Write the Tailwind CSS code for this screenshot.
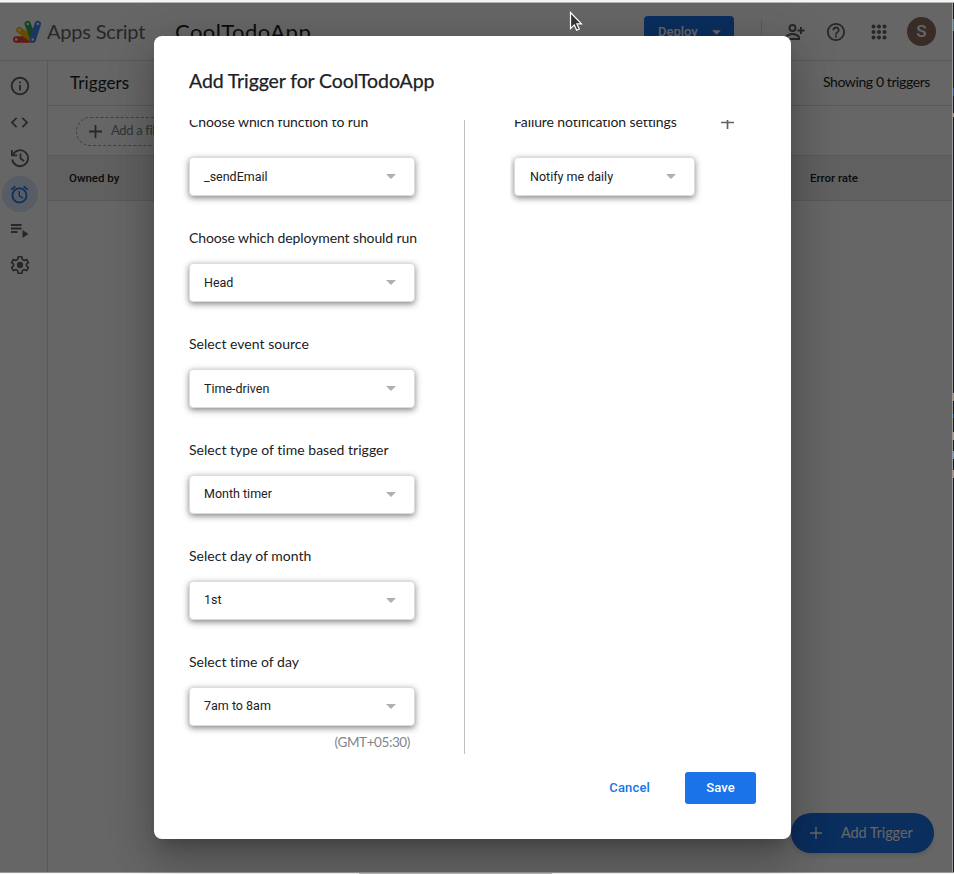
<!DOCTYPE html>
<html lang="en">
<head>
<meta charset="utf-8">
<title>Apps Script - Triggers</title>
<script src="https://cdn.jsdelivr.net/npm/@tailwindcss/browser@4"></script>
</head>
<body class="font-['Lato',sans-serif] text-[#202124]">
<div class="relative flex h-[874px] w-[954px] flex-col overflow-hidden bg-white">
  <div class="h-[3px] shrink-0 border-b border-[#b4b4b4] bg-[#f4f4f4]"></div>
  <div class="flex h-[869px] shrink-0">
    <div class="relative flex w-[952px] flex-col bg-white">
      <header class="flex h-[58px] shrink-0 items-center border-b border-[#dadce0] pl-3">
        <svg class="-mt-0.5 shrink-0" width="30" height="26" viewBox="0 0 30 26" stroke-linecap="round" stroke-width="6.3" fill="none">
          <path d="M4.200 21.500H20.500" stroke="#ea4335"/>
          <path d="M7.400 12L20 21.300" stroke="#fbbc04"/>
          <path d="M15.700 6L20.500 19" stroke="#34a853"/>
          <path d="M25.800 6L20.800 21.500" stroke="#4285f4"/>
          <g fill="#fff" stroke="none"><circle cx="4.200" cy="21.500" r="1.200"/><circle cx="7.400" cy="12" r="1.200"/><circle cx="15.700" cy="6" r="1.200"/><circle cx="25.800" cy="6" r="1.200"/><circle cx="20.700" cy="21.500" r="1.200"/></g>
        </svg>
        <span class="-mt-px ml-[5px] w-32 whitespace-nowrap text-[20px] tracking-[-0.2px] text-[#5f6368]">Apps Script</span>
        <span class="-mt-px w-[469px] whitespace-nowrap text-[22px] tracking-[0.45px]">CoolTodoApp</span>
        <div class="flex h-8 w-[90px] items-center rounded bg-[#1a73e8] pl-[14px] font-['Roboto',sans-serif] text-[13px] font-medium text-white">
          <span class="w-[54px]">Deploy</span>
          <svg class="mt-[2px]" width="9" height="5" viewBox="0 0 10 5" fill="#fff"><path d="M0 0h10L5 5z"/></svg>
        </div>
        <div class="ml-[27px] h-6 w-px bg-[#dadce0]"></div>
        <svg class="ml-[21px]" width="24" height="24" viewBox="0 0 24 24" fill="none" stroke="#5f6368" stroke-width="2"><circle cx="9.500" cy="8" r="3"/><path d="M3 19v-1.500C3 15.500 7 14 9.500 14s6.500 1.500 6.500 3.500V19zM18 7v7M14.500 10.500h7"/></svg>
        <svg class="ml-[17px]" width="24" height="24" viewBox="0 0 24 24" fill="#5f6368"><path d="M11 18h2v-2h-2v2zm1-16C6.480 2 2 6.480 2 12s4.480 10 10 10 10-4.480 10-10S17.520 2 12 2zm0 18c-4.410 0-8-3.590-8-8s3.590-8 8-8 8 3.590 8 8-3.590 8-8 8zm0-14c-2.210 0-4 1.790-4 4h2c0-1.100.900-2 2-2s2 .900 2 2c0 2-3 1.750-3 5h2c0-2.250 3-2.500 3-5 0-2.210-1.790-4-4-4z" transform="translate(1.200 1.200) scale(.9)"/></svg>
        <svg class="ml-[19px]" width="24" height="24" viewBox="0 0 24 24" fill="#5f6368"><circle cx="6.500" cy="6.500" r="2"/><circle cx="12" cy="6.500" r="2"/><circle cx="17.500" cy="6.500" r="2"/><circle cx="6.500" cy="12" r="2"/><circle cx="12" cy="12" r="2"/><circle cx="17.500" cy="12" r="2"/><circle cx="6.500" cy="17.500" r="2"/><circle cx="12" cy="17.500" r="2"/><circle cx="17.500" cy="17.500" r="2"/></svg>
        <div class="ml-4 flex size-[29px] items-center justify-center rounded-full bg-[#8d6e63] font-['Roboto',sans-serif] text-[17px] font-medium text-white">S</div>
      </header>
      <div class="flex min-h-0 flex-1">
        <nav class="flex w-12 shrink-0 flex-col items-center border-r border-[#dadce0] pr-2 pt-[7px]">
          <div class="flex size-9 items-center justify-center"><svg width="22" height="22" viewBox="0 0 24 24" fill="#5f6368"><path d="M11 7h2v2h-2zm0 4h2v6h-2zm1-9C6.480 2 2 6.480 2 12s4.480 10 10 10 10-4.480 10-10S17.520 2 12 2zm0 18c-4.410 0-8-3.590-8-8s3.590-8 8-8 8 3.590 8 8-3.590 8-8 8z"/></svg></div>
          <div class="flex size-9 items-center justify-center"><svg width="21" height="21" viewBox="0 0 24 24" fill="#5f6368"><path d="M9.400 16.600L4.800 12l4.600-4.600L8 6l-6 6 6 6 1.400-1.400zm5.200 0l4.600-4.600-4.600-4.600L16 6l6 6-6 6-1.400-1.400z"/></svg></div>
          <div class="flex size-9 items-center justify-center"><svg width="20" height="20" viewBox="0 0 20 20" fill="none" stroke="#5f6368" stroke-width="1.800"><path d="M3 6.500A8 8 0 1 1 2.200 11.500M1.900 2v5.300h5.300M10.500 5.500v5l3.600 2.500"/></svg></div>
          <div class="flex size-9 items-center justify-center rounded-full bg-[#dce6fa]"><svg width="21" height="21" viewBox="0 0 24 24" fill="#1a73e8"><path d="M22 5.720l-4.600-3.860-1.290 1.530 4.600 3.860L22 5.720zM7.880 3.390L6.600 1.860 2 5.710l1.290 1.530 4.590-3.850zM12.500 8H11v6l4.750 2.850.750-1.230-4-2.370V8zM12 4c-4.970 0-9 4.030-9 9s4.020 9 9 9a9 9 0 0 0 0-18zm0 16c-3.870 0-7-3.130-7-7s3.130-7 7-7 7 3.130 7 7-3.130 7-7 7z"/></svg></div>
          <div class="flex size-9 items-center justify-center"><svg class="mt-px" width="18" height="16" viewBox="0 0 18 16" fill="#5f6368"><path d="M0 1h10.500v2H0zM0 4.500h10.500v2H0zM0 8h6.500v2H0zM11.500 7l6 4-6 4z"/></svg></div>
          <div class="flex size-9 items-center justify-center"><svg class="-mt-0.5" width="22" height="22" viewBox="0 0 24 24" fill="none" stroke="#5f6368" stroke-width="1.900" stroke-linejoin="round"><path d="M10 3h4l.5 2.800 2 1.200 2.700-1 2 3.400-2.200 1.800v1.600l2.200 1.800-2 3.400-2.700-1-2 1.200L14 21h-4l-.5-2.800-2-1.200-2.700 1-2-3.400L5 12.800v-1.600L2.800 9.400l2-3.400 2.700 1 2-1.200z"/><circle cx="12" cy="12" r="3.500" fill="#5f6368" stroke="none"/></svg></div>
        </nav>
        <main class="flex flex-1 flex-col">
          <div class="flex h-[45px] items-center justify-between border-b border-[#dadce0] px-[22px]">
            <span class="text-[17px] tracking-[0.1px]">Triggers</span>
            <span class="-mt-[3px] text-[14px] tracking-[-0.4px]">Showing 0 triggers</span>
          </div>
          <div class="flex h-[50px] items-center border-b border-[#dadce0] pl-[28px]">
            <div class="mt-px flex h-[29px] w-[150px] items-center rounded-full border border-dashed border-[#9aa0a6] pl-3 text-[13px] tracking-[-0.35px] text-[#80868b]">
              <svg class="mr-[9px]" width="13" height="13" viewBox="0 0 13 13" stroke="#5f6368" stroke-width="1.800"><path d="M6.500 0v13M0 6.500h13"/></svg>Add a file
            </div>
          </div>
          <div class="flex h-[45px] items-center justify-between border-b border-[#dadce0] bg-[#f1f1f1] pl-[21px] pr-[94px] pt-0.5 font-['Roboto',sans-serif] text-[11.5px] font-medium">
            <span>Owned by</span><span>Error rate</span>
          </div>
        </main>
      </div>
      <div class="absolute bottom-[19px] right-[18px] flex h-10 w-[143px] items-center rounded-full bg-[#1a73e8] pl-[19px] text-[14.5px] text-white shadow-md">
        <svg class="mr-[19px]" width="12" height="12" viewBox="0 0 13 13" stroke="#fff" stroke-width="1.500"><path d="M6.500 0v13M0 6.500h13"/></svg>
        <span class="whitespace-nowrap tracking-[-0.1px]">Add Trigger</span>
      </div>
      <div class="absolute inset-0 bg-black/60"></div>
    </div>
    <div class="w-px bg-[#999]"></div>
    <div class="relative w-px bg-[#15171a]">
      <div class="absolute top-[16px] h-3 w-px bg-[#477a93]"></div>
      <div class="absolute top-[85px] h-2 w-px bg-[#2447ad]"></div>
      <div class="absolute top-[110px] h-1 w-px bg-[#a88973]"></div>
      <div class="absolute top-[390px] h-2 w-px bg-[#9b9276]"></div>
      <div class="absolute top-[411px] h-1 w-px bg-[#163b80]"></div>
      <div class="absolute top-[429px] h-2 w-px bg-[#a89b8a]"></div>
      <div class="absolute top-[448px] h-2 w-px bg-[#629eb9]"></div>
      <div class="absolute top-[467px] h-2 w-px bg-[#a98976]"></div>
    </div>
  </div>
  <div class="h-px shrink-0 bg-[#999]"></div>
  <div class="h-px shrink-0 bg-[#f4f4f4] pl-[359px]"><div class="h-px w-[193px] bg-[#bdbdbd]"></div></div>

  <section class="absolute left-[154px] top-[36px] flex h-[803px] w-[637px] flex-col rounded-lg bg-white pt-[31px] shadow-[0_11px_15px_-7px_rgba(0,0,0,0.2),0_24px_38px_3px_rgba(0,0,0,0.14),0_9px_46px_8px_rgba(0,0,0,0.12)]">
    <h1 class="h-[53px] pl-[35px] text-[19.5px] leading-[28px]"><span class="whitespace-nowrap tracking-[-0.1px] [-webkit-text-stroke:0.25px_#202124]">Add Trigger for CoolTodoApp</span></h1>
    <div class="flex h-[634px] overflow-hidden pl-[31px]">
      <div id="fields" class="-mt-2 w-[279px] pl-1"></div>
      <div class="w-px bg-[#bdc1c6]"></div>
      <div class="ml-[45px] w-[242px] overflow-hidden pl-1">
        <div class="-mt-[9px] flex h-5 items-center">
          <span class="w-[207px] whitespace-nowrap text-[14px] tracking-[-0.1px]">Failure notification settings</span>
          <svg class="mt-[3px]" width="13" height="13" viewBox="0 0 13 13" stroke="#5f6368" stroke-width="1.700"><path d="M6.500 0v13M0 6.500h13"/></svg>
        </div>
        <div class="mt-[26px] flex h-[39px] w-[181px] items-center justify-between rounded border border-[#dcdcde] bg-white pl-[15px] pr-[18px] font-['Roboto',sans-serif] text-[12.5px] shadow-[0_2px_6px_rgba(60,64,67,0.65)]">
          <span class="pt-px">Notify me daily</span><svg width="10" height="5" viewBox="0 0 10 5" fill="#b0b0b0"><path d="M0 0h10L5 5z"/></svg>
        </div>
      </div>
    </div>
    <div class="flex items-center justify-end pr-[35px] pt-[18px] font-['Roboto',sans-serif] text-[13px] font-medium tracking-[0.15px]">
      <span class="mr-[35px] text-[#1a73e8]">Cancel</span>
      <span class="flex h-8 w-[71px] items-center justify-center rounded-[3px] bg-[#1a73e8] text-white">Save</span>
    </div>
  </section>

  <svg class="absolute left-[569px] top-[11px]" width="14" height="21" viewBox="0 0 14 21"><path d="M1.500 1.500v16l3.800-3.600 2.400 5.300 2.600-1.200-2.400-5.100h4.600z" fill="#333" stroke="#fff" stroke-width="1.200"/></svg>
</div>
<script>
  const fields = [
    ["Choose which function to run", "_sendEmail"],
    ["Choose which deployment should run", "Head"],
    ["Select event source", "Time-driven"],
    ["Select type of time based trigger", "Month timer"],
    ["Select day of month", "1st"],
    ["Select time of day", "7am to 8am"],
  ];
  document.getElementById("fields").innerHTML = fields.map(([label, value], i) => `
    <div class="${i ? "h-[106px] pt-[10px]" : "h-[106px]"}">
      <div class="h-5 whitespace-nowrap text-[14px] leading-5 ${i < 2 ? "tracking-[-0.11px]" : "tracking-[0.02px]"}">${label}</div>
      <div class="${i ? "mt-[15px]" : "mt-[25px]"} flex h-[39px] w-[226px] items-center justify-between rounded border border-[#dcdcde] bg-white pl-[14px] pr-[18px] font-['Roboto',sans-serif] text-[12.5px] shadow-[0_2px_6px_rgba(60,64,67,0.65)]">
        <span class="${i < 3 ? "pt-px" : "pt-0"}">${value}</span><svg width="10" height="5" viewBox="0 0 10 5" fill="#b0b0b0"><path d="M0 0h10L5 5z"/></svg>
      </div>
    </div>`).join("") + `<div class="-mt-[16px] w-[221px] text-right text-[13.5px] leading-5 tracking-[-0.4px] text-[#80868b]">(GMT+05:30)</div>`;
</script>
</body>
</html>
